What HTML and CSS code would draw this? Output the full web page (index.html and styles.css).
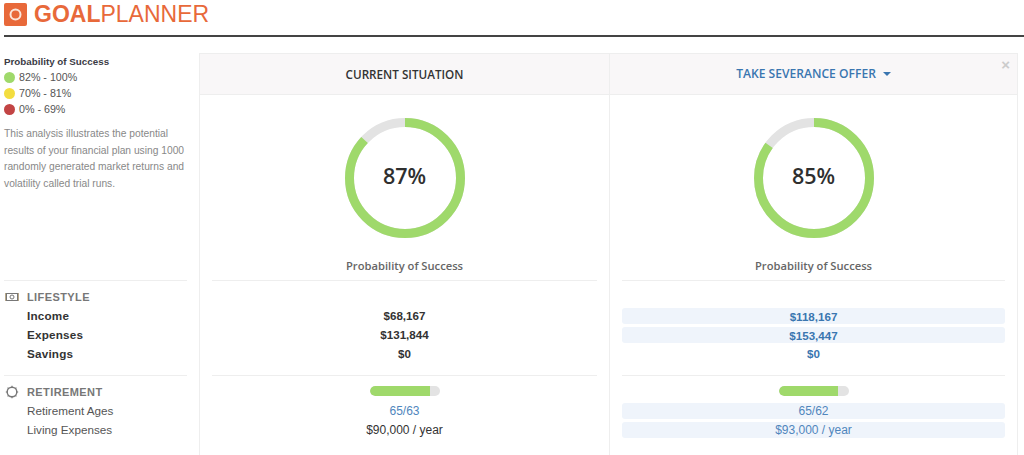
FILE: index.html
```html
<!DOCTYPE html>
<html lang="en">
<head>
    <meta charset="UTF-8">
    <meta name="viewport" content="width=device-width, initial-scale=1.0">
    <title>Goal Planner</title>
    <link rel="stylesheet" href="styles.css">
</head>
<body>
    <header class="top-bar">
        <svg class="logo-icon" width="23" height="23" viewBox="0 0 23 23">
            <rect width="23" height="23" rx="2" fill="#e8693a"/>
            <circle cx="11.500" cy="11.500" r="5" fill="none" stroke="#fbe6dc" stroke-width="2"/>
        </svg>
        <div class="logo-text"><b>GOAL</b>PLANNER</div>
    </header>

    <main class="layout">
        <aside class="sidebar">
            <div class="intro">
                <div class="legend-title">Probability of Success</div>
                <div class="legend-item"><span class="dot dot-green"></span>82% - 100%</div>
                <div class="legend-item"><span class="dot dot-yellow"></span>70% - 81%</div>
                <div class="legend-item"><span class="dot dot-red"></span>0% - 69%</div>
                <p class="intro-text">This analysis illustrates the potential results of your financial plan using 1000 randomly generated market returns and volatility called trial runs.</p>
            </div>
            <section class="section">
                <div class="row section-name">
                    <svg class="section-icon" width="14" height="14" viewBox="0 0 14 14">
                        <rect x="1.500" y="3.500" width="11" height="7" fill="none" stroke="#777" stroke-width="1"/>
                        <path d="M0.500 3v8M13.500 3v8" stroke="#b9a98a" stroke-width="1"/>
                        <circle cx="7" cy="7" r="2" fill="none" stroke="#777" stroke-width="1"/>
                    </svg>
                    LIFESTYLE
                </div>
                <div class="row label strong">Income</div>
                <div class="row label strong">Expenses</div>
                <div class="row label strong">Savings</div>
            </section>
            <section class="section">
                <div class="row section-name">
                    <svg class="section-icon" width="14" height="14" viewBox="0 0 14 14">
                        <circle cx="7" cy="7" r="4.800" fill="none" stroke="#777" stroke-width="1.400"/>
                        <path d="M7 0.800v1.400M7 11.800v1.400M0.800 7h1.400M11.800 7h1.400M2.600 2.600l1 1M10.400 10.400l1 1M2.600 11.400l1-1M10.400 3.600l1-1" stroke="#777" stroke-width="1.200"/>
                    </svg>
                    RETIREMENT
                </div>
                <div class="row label">Retirement Ages</div>
                <div class="row label">Living Expenses</div>
            </section>
        </aside>

        <div class="panel">
            <span class="close-btn">&times;</span>
            <div class="column">
                <div class="column-head">CURRENT SITUATION</div>
                <div class="chart">
                    <div class="ring">
                        <svg width="120" height="120" viewBox="0 0 120 120">
                            <circle class="ring-track" cx="60" cy="60" r="55.500"/>
                            <circle class="ring-value" cx="60" cy="60" r="55.500" pathLength="100" stroke-dasharray="87 100"/>
                        </svg>
                        <div class="ring-label">87%</div>
                    </div>
                    <div class="chart-title">Probability of Success</div>
                </div>
                <section class="section values">
                    <div class="row spacer"></div>
                    <div class="row strong">$68,167</div>
                    <div class="row strong">$131,844</div>
                    <div class="row strong">$0</div>
                </section>
                <section class="section values">
                    <div class="row"><div class="bar"><div class="bar-fill" style="width: 87%"></div></div></div>
                    <div class="row link">65/63</div>
                    <div class="row">$90,000 / year</div>
                </section>
            </div>

            <div class="column">
                <div class="column-head link">TAKE SEVERANCE OFFER <span class="caret"></span></div>
                <div class="chart">
                    <div class="ring">
                        <svg width="120" height="120" viewBox="0 0 120 120">
                            <circle class="ring-track" cx="60" cy="60" r="55.500"/>
                            <circle class="ring-value" cx="60" cy="60" r="55.500" pathLength="100" stroke-dasharray="85 100"/>
                        </svg>
                        <div class="ring-label">85%</div>
                    </div>
                    <div class="chart-title">Probability of Success</div>
                </div>
                <section class="section values">
                    <div class="row spacer"></div>
                    <div class="row strong link changed">$118,167</div>
                    <div class="row strong link changed">$153,447</div>
                    <div class="row strong link">$0</div>
                </section>
                <section class="section values">
                    <div class="row"><div class="bar"><div class="bar-fill" style="width: 85%"></div></div></div>
                    <div class="row link changed">65/62</div>
                    <div class="row link changed">$93,000 / year</div>
                </section>
            </div>
        </div>
    </main>
</body>
</html>
```

FILE: styles.css
```css
html, body {
    height: 455px;
    overflow: hidden;
}
body {
    margin: 0;
    font-family: "Liberation Sans", Arial, sans-serif;
    font-size: 12px;
    color: #333;
    background: #fff;
}
.top-bar {
    display: flex;
    align-items: flex-start;
    gap: 7px;
    height: 32px;
    margin-left: 4px;
    padding-top: 3px;
    border-bottom: 2px solid #444;
}
.logo-icon {
    flex: none;
}
.logo-text {
    font-size: 23px;
    line-height: 22px;
    color: #e8693a;
}
.layout {
    display: flex;
    align-items: flex-start;
    padding: 16px 6px 0 4px;
}
.sidebar {
    flex: none;
    width: 183px;
    margin-right: 12px;
}
.intro {
    height: 227px;
}
.legend-title {
    height: 16px;
    font-weight: bold;
    font-size: 9.800px;
    color: #3b3b45;
    line-height: 17px;
}
.legend-item {
    display: flex;
    align-items: center;
    gap: 4px;
    height: 16px;
    font-size: 10.700px;
    color: #555;
}
.dot {
    width: 11px;
    height: 11px;
    border-radius: 50%;
}
.dot-green { background: #9fd96b; }
.dot-yellow { background: #f3dd3f; }
.dot-red { background: #c24444; }
.intro-text {
    margin: 9px 0 0;
    font-size: 10.250px;
    line-height: 16.500px;
    color: #888;
}
.section {
    border-top: 1px solid #eee;
    padding: 6px 0 12px;
}
.row {
    display: flex;
    align-items: center;
    height: 19px;
}
.section-name {
    color: #777;
    font-weight: bold;
    font-size: 11px;
    letter-spacing: 0.4px;
}
.section-icon {
    flex: none;
    width: 14px;
    margin: 0 8px 0 1px;
}
.label {
    padding-left: 23px;
    font-size: 11.700px;
    color: #555;
}
.label.strong {
    color: #333;
    letter-spacing: 0.2px;
}
.strong {
    font-weight: bold;
}
.panel {
    flex: 1;
    display: flex;
    position: relative;
    height: 420px;
    border: 1px solid #eee;
    border-bottom: none;
}
.close-btn {
    position: absolute;
    top: 2px;
    right: 7px;
    font-size: 15px;
    font-weight: bold;
    color: #ccc;
}
.column {
    flex: 1;
    min-width: 0;
}
.column:first-of-type {
    flex: none;
    width: 409px;
}
.column + .column {
    border-left: 1px solid #eee;
}
.column-head {
    display: flex;
    align-items: center;
    justify-content: center;
    gap: 7px;
    height: 39px;
    padding-bottom: 1px;
    background: #f9f7f8;
    border-bottom: 1px solid #eee;
    font-family: "Open Sans", sans-serif;
    font-weight: 600;
    font-size: 11.700px;
}
.column-head.link {
    font-size: 12.100px;
    color: #3a76b0;
}
.link {
    color: #4f86bd;
}
.strong.link {
    color: #3a76b0;
}
.caret {
    width: 0;
    height: 0;
    border-left: 4px solid transparent;
    border-right: 4px solid transparent;
    border-top: 4px solid #3a76b0;
}
.chart {
    display: flex;
    flex-direction: column;
    align-items: center;
    height: 185px;
    padding-top: 23px;
    box-sizing: border-box;
}
.ring {
    display: grid;
    place-items: center;
    width: 120px;
    height: 120px;
}
.ring svg, .ring-label {
    grid-area: 1 / 1;
}
.ring svg {
    transform: rotate(-90deg);
}
.ring-track, .ring-value {
    fill: none;
    stroke-width: 9;
}
.ring-track { stroke: #e3e3e3; }
.ring-value { stroke: #9fd96b; }
.ring-label {
    margin-top: -5px;
    font-family: "Open Sans", sans-serif;
    font-weight: 600;
    font-size: 21.500px;
    color: #2f2f2f;
}
.chart-title {
    margin-top: 20px;
    font-family: "Open Sans", sans-serif;
    font-weight: 600;
    font-size: 11.200px;
    color: #666;
}
.values {
    display: flex;
    flex-direction: column;
    margin: 0 12px;
}
.values .row {
    justify-content: center;
}
.values .strong {
    font-size: 11.600px;
}
.changed {
    height: 16px;
    margin: 2px 0 1px;
    background: #eff4fb;
    border-radius: 3px;
}
.bar {
    width: 70px;
    height: 10px;
    margin-top: -1px;
    background: #e3e3e3;
    border-radius: 5px;
    overflow: hidden;
}
.bar-fill {
    height: 100%;
    background: #9fd96b;
    border-radius: 5px 0 0 5px;
}
```
